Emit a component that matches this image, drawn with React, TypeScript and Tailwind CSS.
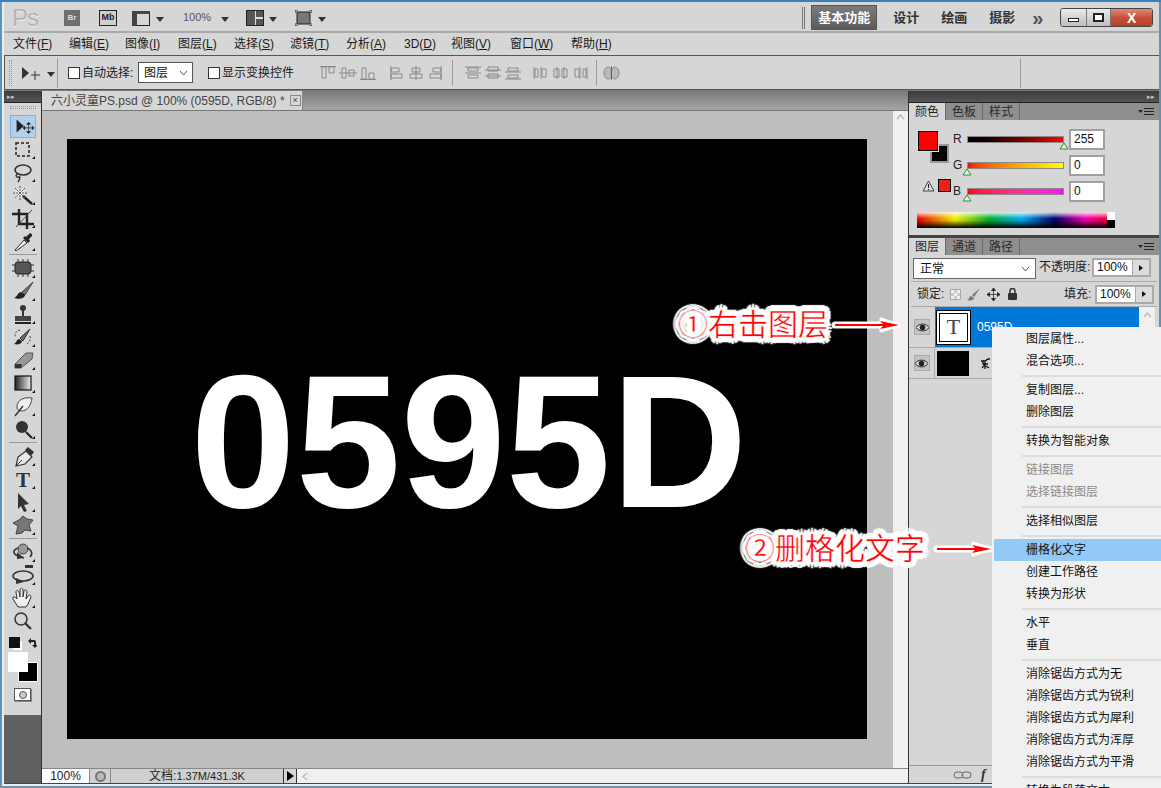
import type { ReactNode } from "react";

const Glyph = ({ children, w = 26, h = 23, corner = true }: { children: ReactNode; w?: number; h?: number; corner?: boolean }) => (
  <svg width={w} height={h} viewBox={`0 0 ${w} ${h}`} className="block">
    {children}
    {corner && <path d="M25 18v3h-3z" fill="#111" />}
  </svg>
);

const Caret = () => <span className="inline-block h-0 w-0 border-x-[4px] border-t-[5px] border-x-transparent border-t-[#333]" />;

const tools: (ReactNode | null)[] = [
  <Glyph corner={false}><path d="M6 4v14l8-7z" fill="#222" /><path d="M19 8v10M14 13h10M19 7l-2 2h4zM19 19l-2-2h4zM13 13l2-2v4zM25 13l-2-2v4z" fill="#222" stroke="#222" strokeWidth=".8" /></Glyph>,
  <Glyph><rect x="6" y="5" width="13" height="13" fill="none" stroke="#222" strokeWidth="1.5" strokeDasharray="3 2" /></Glyph>,
  <Glyph><ellipse cx="13" cy="9" rx="8" ry="5" fill="none" stroke="#333" strokeWidth="1.6" /><path d="M7 13c-2 2 0 4 2 3s0 4-1 5" fill="none" stroke="#333" strokeWidth="1.5" /></Glyph>,
  <Glyph><path d="M12 11l10 9" stroke="#222" strokeWidth="2.4" /><circle cx="10" cy="9" r="4" fill="#eee" /><path d="M10 2v14M3 9h14M5 4l10 10M15 4L5 14" stroke="#555" strokeWidth="1" strokeDasharray="2 1" /></Glyph>,
  <Glyph><path d="M9 2v15h15M2 7h15v15" fill="none" stroke="#222" strokeWidth="2.4" /><path d="M6 20L22 3" stroke="#444" strokeWidth="1" /></Glyph>,
  <Glyph><path d="M6 21l-1-1 9-10 3 3z" fill="#eee" stroke="#333" /><path d="M13 8l5 5 2-2-1-2 3-3c1-2-2-4-3-2l-3 3-1-1z" fill="#222" /></Glyph>,
  null,
  <Glyph><rect x="5" y="5" width="16" height="12" rx="3" fill="#555" stroke="#222" /><path d="M8 2v3M13 2v3M18 2v3M8 17v3M13 17v3M18 17v3M2 8h3M2 14h3M21 8h3M21 14h3" stroke="#333" /></Glyph>,
  <Glyph><path d="M23 2L12 12l3 3z" fill="#777" stroke="#444" /><path d="M11 12c-3 0-3 4-7 6 5 2 11 0 11-3z" fill="#222" /></Glyph>,
  <Glyph><circle cx="13" cy="5" r="3" fill="#333" /><path d="M12 7h2v6h-2z" fill="#333" /><path d="M5 13h16v5H5z" fill="#444" /><path d="M5 20h16" stroke="#222" strokeWidth="2" /></Glyph>,
  <Glyph><path d="M20 3L10 12l3 3z" fill="#666" stroke="#333" /><path d="M9 13c-2 0-2 3-5 5 4 1 8 0 8-3z" fill="#222" /><path d="M10 4C5 5 4 9 6 11M20 10c1 3 0 6-3 8" fill="none" stroke="#444" strokeDasharray="2 1.5" /></Glyph>,
  <Glyph><path d="M5 15L16 4h7l-1 6-11 9H5z" fill="#999" stroke="#555" /><path d="M5 15h7l-1 4H5z" fill="#333" /></Glyph>,
  <Glyph><defs><linearGradient id="g1"><stop offset="0" stopColor="#222" /><stop offset="1" stopColor="#eee" /></linearGradient></defs><rect x="5" y="4" width="16" height="14" fill="url(#g1)" stroke="#111" strokeWidth="1.2" /></Glyph>,
  <Glyph><path d="M22 3c-7-1-15 1-15 9 0 3 2 4 4 4 7 0 10-6 11-13z" fill="#eee" stroke="#444" /><path d="M5 21l8-10" stroke="#333" strokeWidth="1.4" /></Glyph>,
  <Glyph><circle cx="12" cy="9" r="6" fill="#333" /><path d="M16 14l6 6" stroke="#222" strokeWidth="2.2" /></Glyph>,
  null,
  <Glyph><path d="M6 21l2-9 8-6 6 6-7 7z" fill="#e8e8e8" stroke="#333" strokeWidth="1.2" /><path d="M15 5l3-3 6 5-3 4z" fill="#333" /><path d="M6 21l6-6" stroke="#333" /></Glyph>,
  <Glyph><text x="13" y="19" textAnchor="middle" fontFamily="Liberation Serif, serif" fontWeight="700" fontSize="21" fill="#333">T</text></Glyph>,
  <Glyph><path d="M8 2l11 11-5 1 3 6-3 1-3-6-3 3z" fill="#333" /></Glyph>,
  <Glyph><path d="M6 20l2-8-5-3 6-3 4-4 4 3 6 1-4 5 2 6-6-1-3 3z" fill="#777" stroke="#444" strokeLinejoin="round" /></Glyph>,
  null,
  <Glyph><circle cx="13" cy="8" r="5" fill="#999" stroke="#444" /><path d="M8 7C2 9 3 14 9 15l5 2M17 7c5 2 6 6 3 9" fill="none" stroke="#333" strokeWidth="1.6" /><path d="M7 11l7 6-7 1z" fill="#333" /></Glyph>,
  <Glyph><rect x="15" y="1" width="8" height="3" fill="#333" /><ellipse cx="13" cy="12" rx="10" ry="5" fill="none" stroke="#333" strokeWidth="1.6" /><path d="M6 14l8 4-8 2z" fill="#333" /></Glyph>,
  <Glyph><path d="M8 20L3 12c-1-2 1-3 3-1l1 1-1-7c0-2 2-2 3 0l1 5V3c0-2 3-2 3 0v7l1-6c1-2 3-1 3 1l-1 7 2-3c1-2 3-1 3 1l-3 7-2 3z" fill="#eee" stroke="#333" /></Glyph>,
  <Glyph corner={false}><circle cx="11" cy="9" r="6" fill="none" stroke="#333" strokeWidth="1.5" /><path d="M15 13l6 6" stroke="#333" strokeWidth="2.2" /></Glyph>,
];

const alignIcon = (v: number) => (
  <svg width="20" height="14" viewBox="0 0 20 14" className="shrink-0">
    {v === 0 && <path d="M2 .5h16M4 1h4v11H4zM11 1h5v6h-5z" fill="#d8d8d8" stroke="#888" />}
    {v === 1 && <path d="M1 7h18M4 2h4v10H4zM11 4h5v6h-5z" fill="#d8d8d8" stroke="#888" />}
    {v === 2 && <path d="M2 13.500h16M4 2h4v11H4zM11 7h5v6h-5z" fill="#d8d8d8" stroke="#888" />}
    {v === 3 && <path d="M5 0v14M5 2h8v4H5zM5 8h11v4H5z" fill="#d8d8d8" stroke="#888" />}
    {v === 4 && <path d="M10 0v14M6 2h8v4H6zM4 8h12v4H4z" fill="#d8d8d8" stroke="#888" />}
    {v === 5 && <path d="M15 0v14M7 2h8v4H7zM4 8h11v4H4z" fill="#d8d8d8" stroke="#888" />}
    {v === 6 && <path d="M2 1h16M2 7h16M5 2h10v3H5zM5 9h10v3H5z" fill="#d8d8d8" stroke="#888" />}
    {v === 7 && <path d="M2 4h16M2 10h16M5 1h10v4H5zM5 8h10v4H5z" fill="#d8d8d8" stroke="#888" />}
    {v === 8 && <path d="M2 6h16M2 13h16M5 2h10v3H5zM5 9h10v3H5z" fill="#d8d8d8" stroke="#888" />}
    {v === 9 && <path d="M3 1v12M10 1v12M4 3h3v8H4zM11 3h4v8h-4z" fill="#d8d8d8" stroke="#888" />}
    {v === 10 && <path d="M6 1v12M13 1v12M3 3h5v8H3zM11 3h5v8h-5z" fill="#d8d8d8" stroke="#888" />}
    {v === 11 && <path d="M9 1v12M16 1v12M4 3h4v8H4zM12 3h3v8h-3z" fill="#d8d8d8" stroke="#888" />}
  </svg>
);

const menuItems = [
  ["文件", "F", 56], ["编辑", "E", 56], ["图像", "I", 53], ["图层", "L", 56], ["选择", "S", 56], ["滤镜", "T", 56],
  ["分析", "A", 58], ["3D", "D", 47], ["视图", "V", 59], ["窗口", "W", 61], ["帮助", "H", 50],
] as const;

const contextMenu: (string | { t: string; off?: boolean; on?: boolean } | null)[] = [
  "图层属性...", "混合选项...", null, "复制图层...", "删除图层", null, "转换为智能对象", null,
  { t: "链接图层", off: true }, { t: "选择链接图层", off: true }, null, "选择相似图层", null,
  { t: "栅格化文字", on: true }, "创建工作路径", "转换为形状", null, "水平", "垂直", null,
  "消除锯齿方式为无", "消除锯齿方式为锐利", "消除锯齿方式为犀利", "消除锯齿方式为浑厚", "消除锯齿方式为平滑", null, "转换为段落文本",
];

const Eye = () => (
  <div className="flex h-[16px] w-[16px] items-center justify-center border border-[#aaa] bg-[#c4c4c4]">
    <svg width="13" height="9" viewBox="0 0 13 9"><path d="M0 4.500C3 0 10 0 13 4.500 10 9 3 9 0 4.500z" fill="#ddd" stroke="#222" /><circle cx="6.500" cy="4.500" r="2.800" fill="#222" /></svg>
  </div>
);

const PanelMenuIcon = () => (
  <svg width="16" height="8" viewBox="0 0 16 8" className="ml-auto mr-[5px]"><path d="M0 2h5L2.500 5z" fill="#222" /><path d="M6 .500h10M6 3.500h10M6 6.500h10" stroke="#222" /></svg>
);

const PanelTabs = ({ labels }: { labels: string[] }) => (
  <div className="flex h-[17px] items-stretch bg-[#8f8f8f]">
    {labels.map((l, i) => (
      <div key={l} className={`flex w-[37px] items-center justify-center border-r border-[#6a6a6a] text-[12px] ${i === 0 ? "bg-[#d6d6d6] text-[#222]" : "text-[#2a2a2a]"}`}>{l}</div>
    ))}
    <div className="flex flex-1 items-center"><PanelMenuIcon /></div>
  </div>
);

const NumBox = ({ value }: { value: string }) => (
  <div className="flex h-[19px] w-[59px] border-2 border-[#aaa] bg-white text-[12px] leading-[15px] text-[#111]">
    <span className="flex-1 pl-[3px]">{value}</span>
    <span className="flex w-[17px] items-center justify-center border-l border-[#aaa] bg-[#dcdcdc]">
      <span className="h-0 w-0 border-y-[3px] border-l-[4px] border-y-transparent border-l-[#111]" />
    </span>
  </div>
);

const Slider = ({ label, value, track, thumb }: { label: string; value: string; track: string; thumb: string }) => (
  <div className="flex h-[26px] items-center">
    <span className="w-[14px] text-[12px] text-[#222]">{label}</span>
    <div className="relative h-[7px] w-[97px]">
      <div className={`h-full border border-[#8a8a8a] ${track}`} />
      <svg width="10" height="8" viewBox="0 0 10 8" className={`absolute top-[6px] ${thumb}`}><path d="M5 1l4 6H1z" fill="#eee" stroke="#2f8f2f" /></svg>
    </div>
    <div className="ml-[5px] h-[21px] w-[36px] border-2 border-[#a0a0a0] bg-white pl-[3px] text-[12px] leading-[16px] text-[#111]">{value}</div>
  </div>
);

const haloText = "[-webkit-text-stroke:0.4px_#fff] [text-shadow:6px_0_1px_#fff,-6px_0_1px_#fff,0_6px_1px_#fff,0_-6px_1px_#fff,4px_4px_1px_#fff,-4px_4px_1px_#fff,4px_-4px_1px_#fff,-4px_-4px_1px_#fff,5px_3px_1px_#fff,-5px_3px_1px_#fff,5px_-3px_1px_#fff,-5px_-3px_1px_#fff,3px_5px_1px_#fff,-3px_5px_1px_#fff,3px_-5px_1px_#fff,-3px_-5px_1px_#fff,3px_0_0_#fff,-3px_0_0_#fff,0_3px_0_#fff,0_-3px_0_#fff,2px_2px_0_#fff,-2px_2px_0_#fff,2px_-2px_0_#fff,-2px_-2px_0_#fff]";

const Arrow = ({ w }: { w: number }) => (
  <svg width={w + 8} height="16" viewBox={`0 0 ${w + 8} 16`} className="block">
    <path d={`M4 8H${w}`} stroke="#fff" strokeWidth="7" strokeLinecap="round" />
    <path d={`M${w - 16} 2l${18} 6-${18} 6z`} fill="#fff" stroke="#fff" strokeWidth="3" strokeLinejoin="round" />
    <path d={`M4 8H${w - 8}`} stroke="#f00" strokeWidth="2" />
    <path d={`M${w - 17} 4l${19} 4-${19} 4 4-4z`} fill="#f00" />
  </svg>
);

export default function App() {
  return (
    <div className="relative flex h-[788px] w-[1161px] flex-col overflow-hidden border-t-2 border-[#3a7fb5] bg-[#6f90a8] font-[Liberation_Sans,Noto_Sans_CJK_SC,sans-serif] text-[12px]">
      <div className="flex h-[784px] flex-col border-l-[2px] border-r-[2px] border-[#5d92ba] bg-[#d6d6d6]">
        <div className="flex flex-1 flex-col border-b-2 border-l-2 border-[#e8eef2]">
          {/* application bar */}
          <div className="flex h-[31px] items-center border-b-2 border-[#a9a9a9] bg-[#d6d6d6] pt-[2px] text-[#333]">
            <span className="ml-[8px] w-[28px] text-[24px] leading-none tracking-[-1px] text-[#b4b4b4] [text-shadow:0_1px_0_#eee]">Ps</span>
            <span className="ml-[24px] flex h-[16px] w-[16px] items-center justify-center bg-[#6e6e6e] text-[8px] font-bold text-[#ddd]">Br</span>
            <span className="ml-[19px] flex h-[16px] w-[18px] items-center justify-center border border-[#222] bg-[#cfcfcf] text-[9px] font-bold text-[#222]">Mb</span>
            <svg width="18" height="16" viewBox="0 0 18 16" className="ml-[15px]"><rect x=".5" y="1.500" width="17" height="14" fill="#d6d6d6" stroke="#222" /><path d="M0 1h18v3H0zM0 1h5v15H0z" fill="#444" /></svg>
            <span className="ml-[6px]"><Caret /></span>
            <span className="ml-[19px] text-[11px] text-[#555]">100%</span>
            <span className="ml-[10px]"><Caret /></span>
            <svg width="18" height="16" viewBox="0 0 18 16" className="ml-[17px]"><rect x=".5" y=".5" width="17" height="15" fill="#ddd" stroke="#222" /><path d="M1 1h8v14H1zM10 1h7v6h-7zM10 9h7v6h-7z" fill="#555" /></svg>
            <span className="ml-[5px]"><Caret /></span>
            <svg width="17" height="16" viewBox="0 0 17 16" className="ml-[18px]"><rect x="2" y="2" width="13" height="12" fill="#777" stroke="#222" /><path d="M0 3V0h3M14 0h3v3M17 13v3h-3M3 16H0v-3" fill="none" stroke="#222" /></svg>
            <span className="ml-[6px]"><Caret /></span>
            <span className="ml-[476px] h-[22px] w-[3px] border-x border-[#777]" />
            <span className="ml-[6px] flex h-[25px] w-[66px] items-center justify-center border border-[#555] bg-linear-to-b from-[#7c7c7c] to-[#5c5c5c] text-[13px] font-bold text-white">基本功能</span>
            <span className="ml-[16px] w-[48px] text-[13px] font-bold text-[#333]">设计</span>
            <span className="w-[48px] text-[13px] font-bold text-[#333]">绘画</span>
            <span className="w-[43px] text-[13px] font-bold text-[#333]">摄影</span>
            <span className="text-[20px] leading-none font-bold text-[#555]">»</span>
            <div className="ml-[17px] flex h-[19px] w-[93px] overflow-hidden rounded-[3px] border border-[#444]">
              <span className="flex w-[26px] items-end justify-center border-r border-[#777] bg-linear-to-b from-[#ececec] to-[#bdbdbd] pb-[4px]"><span className="h-[4px] w-[11px] border border-[#222] bg-white" /></span>
              <span className="flex w-[24px] items-center justify-center border-r border-[#777] bg-linear-to-b from-[#ececec] to-[#bdbdbd]"><span className="h-[9px] w-[11px] border-2 border-[#222] bg-white" /></span>
              <span className="flex flex-1 items-center justify-center bg-linear-to-b from-[#df8a7a] via-[#c8503a] to-[#b8402c] text-[14px] leading-none font-bold text-white">X</span>
            </div>
          </div>
          {/* menu bar */}
          <div className="flex h-[22px] items-center bg-[#d6d6d6] pl-[9px] text-[12px] text-[#1a1a1a]">
            {menuItems.map(([label, key, w]) => (
              <span key={key} className="shrink-0 whitespace-nowrap" style={{ width: w }}>{label}(<span className="underline">{key}</span>)</span>
            ))}
          </div>
          {/* options bar */}
          <div className="flex h-[35px] items-center border-y border-l border-[#555] bg-[#d6d6d6] text-[#1a1a1a]">
            <span className="ml-[4px] h-[26px] w-[3px] border-x border-dotted border-[#999]" />
            <svg width="24" height="16" viewBox="0 0 24 16" className="ml-[9px]"><path d="M1 2v12l7-6z" fill="#333" /><path d="M14 6v9M10 10h9" stroke="#333" /></svg>
            <span className="ml-[2px]"><Caret /></span>
            <span className="ml-[2px] h-[30px] w-px bg-[#999]" />
            <span className="ml-[10px] h-[12px] w-[12px] border border-[#333] bg-white" />
            <span className="ml-[2px] w-[56px]">自动选择:</span>
            <span className="flex h-[21px] w-[55px] items-center justify-between border border-[#555] bg-white pl-[5px] pr-[4px] text-[12px] text-[#111]">图层
              <svg width="9" height="6" viewBox="0 0 9 6"><path d="M1 1l3.500 4L8 1" fill="none" stroke="#555" /></svg>
            </span>
            <span className="ml-[15px] h-[12px] w-[12px] border border-[#333] bg-white" />
            <span className="ml-[2px] w-[74px]">显示变换控件</span>
            <div className="ml-[22px] flex items-center">
              {[0, 1, 2].map((v) => <span key={v} className="w-[20px]">{alignIcon(v)}</span>)}
              <span className="w-[8px]" />
              {[3, 4, 5].map((v) => <span key={v} className="w-[20px]">{alignIcon(v)}</span>)}
              <span className="ml-[6px] mr-[10px] h-[26px] w-px bg-[#999]" />
              {[6, 7, 8].map((v) => <span key={v} className="w-[20px]">{alignIcon(v)}</span>)}
              <span className="w-[8px]" />
              {[9, 10, 11].map((v) => <span key={v} className="w-[20px]">{alignIcon(v)}</span>)}
              <span className="ml-[5px] mr-[6px] h-[26px] w-px bg-[#999]" />
              <svg width="17" height="14" viewBox="0 0 17 14"><ellipse cx="5" cy="7" rx="4" ry="6" fill="#bbb" stroke="#888" /><ellipse cx="12" cy="7" rx="4" ry="6" fill="#bbb" stroke="#888" /><path d="M8.500 0v14" stroke="#666" /></svg>
            </div>
            <span className="ml-[400px] h-[30px] w-px bg-[#999]" />
          </div>
          {/* workspace */}
          <div className="flex min-h-0 flex-1 border-y border-t-[#7a7a7a] border-b-[#444]">
            {/* tools */}
            <div className="flex w-[38px] shrink-0 flex-col border-r border-[#333] bg-[#606060]">
              <div className="flex h-[11px] items-center bg-linear-to-b from-[#3c3c3c] to-[#555] pl-[3px] text-[7px] leading-none text-[#ccc]">▸▸</div>
              <div className="flex h-[613px] flex-col items-center border-t border-[#222] bg-[#d6d6d6]">
                <div className="mt-[3px] h-[3px] w-[26px] border-y border-dotted border-[#999]" />
                <div className="mt-[6px] flex h-[23px] w-[26px] items-center justify-center border border-[#7db4df] bg-[#b1d0ec]">{tools[0]}</div>
                {tools.slice(1).map((t, i) =>
                  t === null ? (
                    <div key={i} className="my-[1px] h-[2px] w-[28px] shrink-0 border-t border-[#9a9a9a]" />
                  ) : (
                    <div key={i} className="flex h-[23px] shrink-0 items-center justify-center">{t}</div>
                  )
                )}
                {/* colour chips */}
                <div className="mt-[2px] flex h-[14px] w-[28px] items-center justify-between">
                  <span className="relative h-[11px] w-[11px] bg-[#111] shadow-[3px_3px_0_-1px_#fff]" />
                  <svg width="11" height="11" viewBox="0 0 11 11"><path d="M2 4l3-3v2h3a2 2 0 0 1 2 2v3h2l-3 3-3-3h2V5H5v2z" fill="#222" /></svg>
                </div>
                <div className="relative mt-[3px] h-[30px] w-[30px]">
                  <div className="absolute right-0 bottom-0 h-[20px] w-[20px] border border-white bg-black" />
                  <div className="absolute top-0 left-0 h-[20px] w-[20px] bg-white" />
                </div>
                <div className="mt-[6px] flex h-[13px] w-[17px] items-center justify-center border border-[#555] bg-white shadow-[1px_1px_0_#888]"><span className="h-[8px] w-[8px] rounded-full border border-[#555] bg-[#ccc]" /></div>
              </div>
            </div>
            {/* document */}
            <div className="flex w-[867px] shrink-0 flex-col border-r border-[#333]">
              <div className="flex h-[19px] items-stretch bg-linear-to-b from-[#7a7a7a] to-[#a5a5a5]">
                <div className="flex w-[261px] items-center border-r border-[#888] bg-[#d6d6d6] pl-[9px] text-[#444]">
                  <span className="whitespace-nowrap">六小灵童PS.psd @ 100% (0595D, RGB/8) *</span>
                  <span className="ml-[5px] flex h-[11px] w-[11px] items-center justify-center border border-[#888] text-[9px] leading-none text-[#444]">×</span>
                </div>
              </div>
              <div className="flex min-h-0 flex-1">
                <div className="flex flex-1 items-start border-t border-[#777] bg-[#bebebe] pt-[28px] pl-[25px]">
                  <div className="flex h-[600px] w-[800px] items-center justify-center bg-black pt-[4px] pl-[4px] text-[189px] leading-none font-bold text-white">0595D</div>
                </div>
                <div className="flex w-[15px] flex-col items-center border-t border-[#777] bg-[#f0f0f0] pt-[3px] text-[8px] text-[#aaa]">
                  <svg width="9" height="6" viewBox="0 0 9 6"><path d="M1 5l3.500-4L8 5" fill="none" stroke="#bbb" strokeWidth="1.500" /></svg>
                </div>
              </div>
              <div className="flex h-[15px] items-stretch border-t border-[#888] bg-[#f0f0f0] text-[12px] leading-[14px] text-[#222]">
                <span className="w-[47px] bg-white text-center">100%</span>
                <span className="flex w-[22px] items-center justify-center border-x border-[#888] bg-[#d0d0d0]"><span className="h-[11px] w-[11px] rounded-full border-2 border-[#777] bg-[#bbb]" /></span>
                <span className="w-[172px] bg-[#d0d0d0] text-center">文档:<span className="text-[11px]">1.37M/431.3K</span></span>
                <span className="flex w-[14px] items-center justify-center border-x border-[#333] bg-[#d6d6d6]"><span className="h-0 w-0 border-y-[5px] border-l-[7px] border-y-transparent border-l-black" /></span>
                <span className="flex flex-1 items-center pl-[5px]"><svg width="6" height="9" viewBox="0 0 6 9"><path d="M5 1L1 4.500 5 8" fill="none" stroke="#bbb" strokeWidth="1.500" /></svg></span>
              </div>
            </div>
            {/* panels */}
            <div className="flex min-w-0 flex-1 flex-col bg-[#d6d6d6]">
              <div className="flex h-[11px] items-center justify-end bg-linear-to-b from-[#3c3c3c] to-[#555] pr-[4px] text-[7px] leading-none text-[#ccc]">▸▸</div>
              <div className="flex h-[133px] flex-col border-t border-[#222]">
                <PanelTabs labels={["颜色", "色板", "样式"]} />
                <div className="flex h-[91px] pt-[6px]">
                  <div className="flex w-[44px] shrink-0 flex-col">
                    <div className="relative mt-[5px] ml-[9px] h-[32px] w-[32px]">
                      <div className="absolute top-[13px] left-[12px] h-[19px] w-[19px] border-2 border-[#999] bg-black" />
                      <div className="absolute top-0 left-0 h-[20px] w-[20px] border border-black bg-[#f00] shadow-[0_0_0_1px_#ddd]" />
                    </div>
                    <div className="mt-[16px] ml-[13px] flex items-center gap-[3px]">
                      <svg width="13" height="12" viewBox="0 0 13 12"><path d="M6.500 1L12 11H1z" fill="#ddd" stroke="#444" /><path d="M6.500 4v4M6.500 9v1" stroke="#222" /></svg>
                      <span className="h-[13px] w-[13px] border border-black bg-[#e8211b]" />
                    </div>
                  </div>
                  <div className="flex flex-col">
                    <Slider label="R" value="255" track="bg-linear-to-r from-black to-[#f00]" thumb="right-[-5px]" />
                    <Slider label="G" value="0" track="bg-linear-to-r from-[#f00] to-[#ff0]" thumb="left-[-5px]" />
                    <Slider label="B" value="0" track="bg-linear-to-r from-[#f00] to-[#f0f]" thumb="left-[-5px]" />
                  </div>
                </div>
                <svg width="198" height="16" viewBox="0 0 198 16" className="mt-[1px] ml-[8px] block">
                  <defs>
                    <linearGradient id="hue">
                      <stop offset="0" stopColor="#e00" /><stop offset=".2" stopColor="#ee0" /><stop offset=".38" stopColor="#0a3" />
                      <stop offset=".55" stopColor="#0ae" /><stop offset=".72" stopColor="#006" /><stop offset=".88" stopColor="#e0a" /><stop offset="1" stopColor="#e03" />
                    </linearGradient>
                    <linearGradient id="shade" x2="0" y2="1">
                      <stop offset="0" stopColor="#fff" stopOpacity=".85" /><stop offset=".4" stopColor="#fff" stopOpacity="0" />
                      <stop offset=".5" stopColor="#000" stopOpacity="0" /><stop offset="1" stopColor="#000" />
                    </linearGradient>
                  </defs>
                  <rect width="191" height="16" fill="url(#hue)" />
                  <rect width="191" height="16" fill="url(#shade)" />
                  <rect x="190" width="8" height="8" fill="#fff" />
                  <rect x="190" y="8" width="8" height="8" fill="#000" />
                </svg>
              </div>
              <div className="flex min-h-0 flex-1 flex-col border-t-[3px] border-[#444]">
                <PanelTabs labels={["图层", "通道", "路径"]} />
                <div className="flex h-[26px] items-start pt-[3px]">
                  <span className="ml-[4px] flex h-[21px] w-[123px] items-center justify-between border border-[#666] bg-white pl-[6px] pr-[5px] text-[#111]">正常
                    <svg width="9" height="6" viewBox="0 0 9 6"><path d="M1 1l3.500 4L8 1" fill="none" stroke="#555" /></svg>
                  </span>
                  <span className="ml-[3px] w-[53px] leading-[19px] text-[#222]">不透明度:</span>
                  <NumBox value="100%" />
                </div>
                <div className="mx-[2px] flex h-[26px] items-center border-y border-[#aaa]">
                  <span className="ml-[6px] w-[33px] text-[#222]">锁定:</span>
                  <span className="h-[11px] w-[11px] border border-[#aaa] bg-[repeating-conic-gradient(#ccc_0_25%,#eee_0_50%)] bg-[length:6px_6px]" />
                  <svg width="14" height="13" viewBox="0 0 14 13" className="ml-[6px]"><path d="M13 0L5 7l2 2zM4 8C2 8 3 11 0 12c3 1 7 0 7-2z" fill="#777" /></svg>
                  <svg width="13" height="13" viewBox="0 0 13 13" className="ml-[6px]"><path d="M6.500 0v13M0 6.500h13M6.500 0l-2 2.500h4zM6.500 13l-2-2.500h4zM0 6.500l2.500-2v4zM13 6.500l-2.500-2v4z" fill="#222" stroke="#222" strokeWidth=".7" /></svg>
                  <svg width="11" height="12" viewBox="0 0 11 12" className="ml-[7px]"><path d="M3 5V3a2.500 2.500 0 0 1 5 0v2" fill="none" stroke="#333" strokeWidth="1.500" /><rect x="1" y="5" width="9" height="7" rx="1" fill="#333" /></svg>
                  <span className="ml-[46px] w-[31px] text-[#222]">填充:</span>
                  <NumBox value="100%" />
                </div>
                <div className="flex h-[41px] border-b border-[#aaa]">
                  <div className="flex w-[26px] items-center justify-center"><Eye /></div>
                  <div className="flex w-[204px] items-center bg-[#0078d7] pl-[1px]">
                    <div className="flex h-[35px] w-[35px] items-center justify-center border border-black bg-white shadow-[inset_0_0_0_2px_#fff,inset_0_0_0_3px_#000]">
                      <span className="font-[Liberation_Serif,serif] text-[22px] leading-none text-[#444]">T</span>
                    </div>
                    <span className="ml-[6px] text-white">0595D</span>
                  </div>
                  <div className="flex w-[16px] justify-center bg-[#f0f0f0] pt-[5px]"><svg width="9" height="6" viewBox="0 0 9 6"><path d="M1 5l3.500-4L8 5" fill="none" stroke="#bbb" strokeWidth="1.500" /></svg></div>
                </div>
                <div className="flex h-[31px] border-b border-[#aaa]">
                  <div className="flex w-[26px] items-center justify-center border-r border-[#aaa]"><Eye /></div>
                  <div className="ml-[2px] flex items-center">
                    <div className="h-[25px] w-[32px] bg-black" />
                    <svg width="11" height="11" viewBox="0 0 11 11" className="ml-[11px]"><path d="M1 3h4l3-2h2M3 3v3h5M5 3v8M5 6c-1 2-2 3-3 4M6 8l3 2" fill="none" stroke="#111" strokeWidth="1.300" /></svg>
                  </div>
                </div>
                <div className="flex-1" />
                <div className="flex h-[18px] items-center border-t border-[#999] pl-[44px] italic text-[#333]">
                  <svg width="20" height="10" viewBox="0 0 20 10"><rect x="1" y="2" width="9" height="6" rx="3" fill="none" stroke="#666" /><rect x="9" y="2" width="9" height="6" rx="3" fill="none" stroke="#666" /></svg>
                  <span className="ml-[8px] font-[Liberation_Serif,serif] text-[14px] font-bold">f</span>
                </div>
              </div>
            </div>
          </div>
        </div>
      </div>

      {/* context menu */}
      <div className="absolute top-[325px] left-[992px] w-[169px] bg-[#f0f0f0] pt-[1px] pb-[2px] text-[12px] leading-[22px] text-[#111]">
        {contextMenu.map((item, i) => {
          if (item === null) return <div key={i} className="ml-[30px] flex h-[7px] items-center"><div className="h-[2px] w-full bg-[#dcdcdc]" /></div>;
          const o = typeof item === "string" ? { t: item } : item;
          return <div key={i} className={`ml-[2px] h-[22px] pl-[32px] whitespace-nowrap ${o.on ? "bg-[#91c9f7]" : ""} ${o.off ? "text-[#8a8a8a]" : ""}`}>{o.t}</div>;
        })}
      </div>

      {/* annotations */}
      <div className="absolute top-[301px] left-[678px] flex items-center gap-[3px]">
        <span className={`text-[30px] leading-[44px] whitespace-nowrap text-[#f00] ${haloText}`}>①右击图层</span>
        <Arrow w={66} />
      </div>
      <div className="absolute top-[525px] left-[745px] flex items-center gap-[8px]">
        <span className={`text-[30px] leading-[44px] whitespace-nowrap text-[#f00] ${haloText}`}>②删格化文字</span>
        <Arrow w={56} />
      </div>
    </div>
  );
}
